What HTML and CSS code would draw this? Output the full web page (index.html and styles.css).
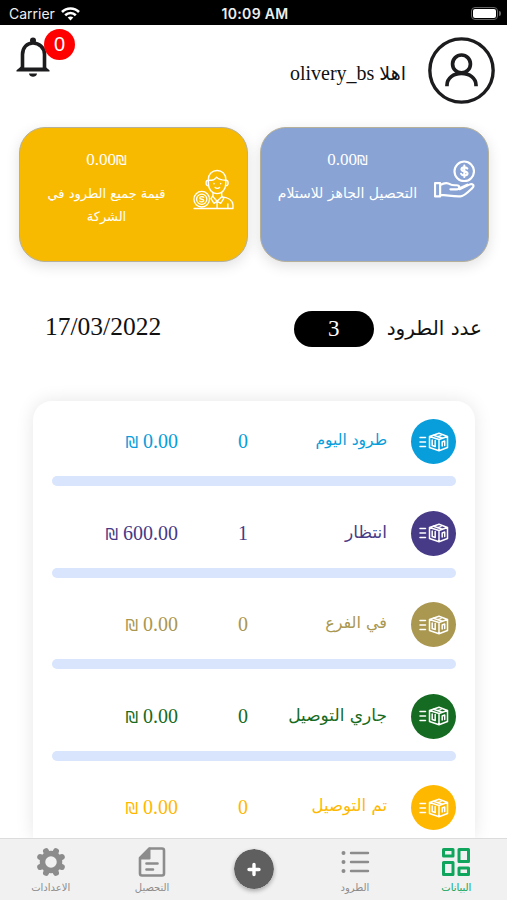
FILE: index.html
```html
<!DOCTYPE html>
<html lang="ar" dir="rtl">

<head>
    <meta charset="UTF-8">
    <meta name="viewport" content="width=device-width, initial-scale=1.0">
    <title>Olivery</title>
    <link rel="stylesheet" href="styles.css">
</head>

<body>
    <!-- shared icons -->
    <svg class="sprite" xmlns="http://www.w3.org/2000/svg">
        <symbol id="box" viewBox="0 0 30 20">
            <g fill="none" stroke="#fff" stroke-width="1.5" stroke-linejoin="round" stroke-linecap="round">
                <path d="M1 5.5h5.5M1 10h5.5M1 14.500h5.500" />
                <path d="M10.500 4.500L20 1.200l8.500 3.300v11L20 18.800l-9.500-3.300zM10.500 4.500L20 7.500l8.500-3M20 7.500v11.300" />
                <path d="M14.500 3.300l8.800 3M18.500 4.800l3.500-1.200" />
                <path d="M13.200 8v5.500l3 1V8.500M23.200 14V10l2.500-1v4.500" />
            </g>
        </symbol>
    </svg>

    <div class="status-bar" dir="ltr">
        <div class="carrier">
            <span>Carrier</span>
            <svg width="19" height="14" viewBox="0 0 19 14" fill="none" stroke="#fff" stroke-width="2.600">
                <path d="M1 5C5.600.400 13.400.400 18 5" />
                <path d="M4.200 8.200c3-2.900 7.600-2.900 10.600 0" />
                <path d="M9.500 13.500L6.700 10.600c1.600-1.400 4-1.400 5.600 0z" fill="#fff" stroke="none" />
            </svg>
        </div>
        <div class="clock">10:09 AM</div>
        <div class="battery-wrap">
            <div class="battery"></div>
            <div class="battery-tip"></div>
        </div>
    </div>

    <header class="header">
        <svg class="avatar" viewBox="0 0 66 66" fill="none" stroke="#1c1c1e">
            <circle cx="33" cy="33" r="31.200" stroke-width="3.300" />
            <circle cx="33" cy="26.500" r="8.800" stroke-width="3.600" />
            <path d="M18.700 48.500v-1c0-7 6.500-11.700 14.300-11.700s14.300 4.700 14.300 11.700v1" stroke-width="3.600" />
        </svg>
        <div class="hello"><span class="ar">اهلا</span> <bdi>olivery_bs</bdi></div>
        <div class="bell">
            <svg width="34" height="40" viewBox="0 0 34 40">
                <circle cx="17" cy="3.500" r="3" fill="#1c1c1e" />
                <path d="M6.500 32V17.500C6.500 10.500 11 6 17 6s11.500 4.500 11.500 11.500V32" fill="none" stroke="#1c1c1e" stroke-width="3.600" />
                <path d="M.500 34.500v-1.300L5 29.500v1h24v-1l4.500 3.700v1.300z" fill="#1c1c1e" />
                <path d="M13 36.500h8c-.5 4.300-7.500 4.300-8 0z" fill="#1c1c1e" />
            </svg>
            <span class="badge">0</span>
        </div>
    </header>

    <section class="cards">
        <div class="card blue">
            <svg class="card-icon" viewBox="0 0 40 40" fill="none" stroke="#fff" stroke-width="2.100" stroke-linejoin="round" stroke-linecap="round">
                <circle cx="29.500" cy="11" r="9.500" />
                <path d="M32.500 8.300c-.600-1.300-5.500-2-5.700.700 0 2.800 5.900 1.400 5.900 4.200-.1 2.700-5.300 2.300-6.200.3M29.600 5.500v11" />
                <path d="M1 22.500h5v13H1zM6 24.500c4-2.500 7-2.800 10-.700 1.500 1 3.500.800 6 .8 3.500 0 3.500 4 0 4h-6M24 28l8.500-4M25 28.500l9.500-4.500c3-1.400 5.500 1 3 3.200-3.500 3.300-7.500 7.800-11.500 8.300-8 .5-13-1.500-20-1.500" />
            </svg>
            <div class="card-text">
                <div class="card-amount"><bdi dir="ltr">0.00<span class="shekel">₪</span></bdi></div>
                <div class="card-title ar">التحصيل الجاهز للاستلام</div>
            </div>
        </div>
        <div class="card yellow">
            <svg class="card-icon" viewBox="0 0 40 40" fill="none" stroke="#fff" stroke-width="1.300" stroke-linejoin="round" stroke-linecap="round">
                <path d="M15 14V10c0-5 3.500-8.500 8.500-8.500S32 5 32 10v4c0 6-3.500 10-8.500 10S15 20 15 14z" />
                <path d="M15 11h3c2.500 0 4-1.500 5-3 2 2.500 5 3 9 3M15 11c-3 0-3 5.500 0 5.500M32 11c3 0 3 5.500 0 5.500M20.500 14v.5M27 14v.5M21.500 18c1 1.300 3.500 1.300 4.500 0" />
                <path d="M19.500 23v4l4 4.500 4.500-4.500v-4M19.500 26l-2 3 3 4.500 3-2 3.500 2 3-4.500-2-3M28 27c7 1 10.500 3 11 8v3.500H1M23.500 32v6M34 34v4" />
                <circle cx="8.500" cy="29.500" r="7.600" />
                <circle cx="8.500" cy="29.500" r="5" />
                <path d="M10.500 27.500c-1-1-4-.7-4 .8 0 1.700 4 .7 4 2.500 0 1.500-3 1.700-4 .5" />
            </svg>
            <div class="card-text">
                <div class="card-amount"><bdi dir="ltr">0.00<span class="shekel">₪</span></bdi></div>
                <div class="card-title ar">قيمة جميع الطرود في الشركة</div>
            </div>
        </div>
    </section>

    <section class="summary">
        <div class="summary-title ar">عدد الطرود</div>
        <div class="pill">3</div>
        <div class="date" dir="ltr">17/03/2022</div>
    </section>

    <main class="panel">
        <div class="row today">
            <div class="row-info">
                <div class="dot"><svg width="30" height="20"><use href="#box" /></svg></div>
                <div class="name ar">طرود اليوم</div>
                <div class="count">0</div>
                <div class="amount" dir="ltr"><span class="shekel">₪</span> 0.00</div>
            </div>
            <div class="bar"></div>
        </div>
        <div class="row waiting">
            <div class="row-info">
                <div class="dot"><svg width="30" height="20"><use href="#box" /></svg></div>
                <div class="name ar">انتظار</div>
                <div class="count">1</div>
                <div class="amount" dir="ltr"><span class="shekel">₪</span> 600.00</div>
            </div>
            <div class="bar"></div>
        </div>
        <div class="row branch">
            <div class="row-info">
                <div class="dot"><svg width="30" height="20"><use href="#box" /></svg></div>
                <div class="name ar">في الفرع</div>
                <div class="count">0</div>
                <div class="amount" dir="ltr"><span class="shekel">₪</span> 0.00</div>
            </div>
            <div class="bar"></div>
        </div>
        <div class="row delivering">
            <div class="row-info">
                <div class="dot"><svg width="30" height="20"><use href="#box" /></svg></div>
                <div class="name ar">جاري التوصيل</div>
                <div class="count">0</div>
                <div class="amount" dir="ltr"><span class="shekel">₪</span> 0.00</div>
            </div>
            <div class="bar"></div>
        </div>
        <div class="row delivered">
            <div class="row-info">
                <div class="dot"><svg width="30" height="20"><use href="#box" /></svg></div>
                <div class="name ar">تم التوصيل</div>
                <div class="count">0</div>
                <div class="amount" dir="ltr"><span class="shekel">₪</span> 0.00</div>
            </div>
        </div>
    </main>

    <nav class="tabs">
        <a class="tab active">
            <svg width="30" height="30" viewBox="0 0 30 30" fill="none" stroke="#10a55c" stroke-width="3" stroke-linejoin="round">
                <rect x="2.500" y="2.500" width="9.500" height="6.500" />
                <rect x="18" y="2.500" width="9.500" height="12" />
                <rect x="2.500" y="15.500" width="9.500" height="12" />
                <rect x="18" y="21" width="9.500" height="6.500" />
            </svg>
            <span class="ar">البيانات</span>
        </a>
        <a class="tab">
            <svg width="30" height="30" viewBox="0 0 30 30" stroke="#8c8c8c" stroke-width="2.400" stroke-linecap="round">
                <path d="M11 6h17M11 15h17M11 24h17" />
                <path d="M3.500 6h.01M3.500 15h.01M3.500 24h.01" stroke-width="4" />
            </svg>
            <span class="ar">الطرود</span>
        </a>
        <a class="tab add">
            <svg width="40" height="40" viewBox="0 0 40 40">
                <circle cx="20" cy="20" r="20" fill="#5f5f5f" />
                <path d="M20 15.500v10M15 20.500h10" stroke="#fff" stroke-width="3.400" stroke-linecap="round" />
            </svg>
        </a>
        <a class="tab">
            <svg width="30" height="30" viewBox="0 0 30 30">
                <path d="M12.500 1.500H25q2 0 2 2v23q0 2-2 2H5q-2 0-2-2V11z" fill="none" stroke="#8c8c8c" stroke-width="2.600" stroke-linejoin="round" />
                <path d="M12.500 1.500v10H3z" fill="#8c8c8c" stroke="#8c8c8c" stroke-width="2" stroke-linejoin="round" />
                <path d="M9.500 16.500h11M9.500 22.500h6.500" stroke="#8c8c8c" stroke-width="2.600" stroke-linecap="round" />
            </svg>
            <span class="ar">التحصيل</span>
        </a>
        <a class="tab">
            <svg width="30" height="30" viewBox="0 0 30 30">
                <circle cx="15" cy="15" r="8.500" fill="none" stroke="#8c8c8c" stroke-width="5.500" />
                <g stroke="#8c8c8c" stroke-width="6" stroke-linecap="round">
                    <path d="M20 4.200l-.7 1.700M10 4.200l.7 1.700M20 25.800l-.7-1.700M10 25.800l.7-1.700M4.200 10l1.700.7M4.200 20l1.700-.7M25.800 10l-1.700.7M25.800 20l-1.700-.7" />
                </g>
            </svg>
            <span class="ar">الاعدادات</span>
        </a>
    </nav>
</body>

</html>
```

FILE: styles.css
```css
* {
    box-sizing: border-box;
}

body {
    margin: 0;
    height: 900px;
    display: flex;
    flex-direction: column;
    overflow: hidden;
    background-color: #fff;
    color: #111;
    font-family: "Liberation Serif", "DejaVu Sans", serif;
}

.ar {
    font-family: "DejaVu Sans", sans-serif;
}

.shekel {
    font-family: "DejaVu Sans", sans-serif;
    font-size: 0.8em;
}

.sprite {
    position: absolute;
    width: 0;
    height: 0;
}

svg {
    display: block;
    flex: none;
}

/* Status bar */
.status-bar {
    height: 25px;
    flex: none;
    display: grid;
    grid-template-columns: 1fr auto 1fr;
    align-items: center;
    padding: 2px 6px 0 9px;
    background-color: #000;
    color: #eee;
    font-family: Inter, sans-serif;
    font-size: 14px;
}

.carrier {
    display: flex;
    align-items: center;
    gap: 6px;
}

.clock {
    font-weight: 600;
    font-size: 14px;
    letter-spacing: 0.3px;
}

.battery-wrap {
    display: flex;
    justify-content: flex-end;
    align-items: center;
    gap: 1px;
}

.battery {
    width: 27px;
    height: 13px;
    border: 1px solid #666;
    border-radius: 4px;
    background: #fff content-box;
    padding: 1px;
}

.battery-tip {
    width: 2px;
    height: 5px;
    border-radius: 0 2px 2px 0;
    background-color: #666;
}

/* Header */
.header {
    height: 102px;
    flex: none;
    display: flex;
    align-items: flex-start;
    padding: 12px 12px 0 16px;
}

.avatar {
    width: 67px;
    height: 67px;
}

.hello {
    margin: 23px 22px 0 auto;
    font-size: 20px;
    line-height: 26px;
}

.hello .ar {
    font-size: 19px;
}

.bell {
    position: relative;
    width: 34px;
}

.badge {
    position: absolute;
    left: 28px;
    top: -8px;
    width: 31px;
    height: 31px;
    border-radius: 50%;
    background-color: #ff0000;
    color: #fff;
    font: 20px/31px "Liberation Sans", sans-serif;
    text-align: center;
}

/* Cards */
.cards {
    flex: none;
    display: flex;
    gap: 12px;
    padding: 0 18px 0 19px;
}

.card {
    flex: 1;
    height: 135px;
    display: flex;
    border: 1px solid #b5b09a;
    border-radius: 26px;
    color: #fff;
    box-shadow: 0 4px 14px rgba(0, 0, 0, 0.12);
}

.blue {
    background-color: #88a3d4;
}

.yellow {
    background-color: #f8ba00;
}

.card-icon {
    width: 41px;
    height: 41px;
    margin: 32px 13px 0 0;
}

.yellow .card-icon {
    margin-top: 41px;
}

.card-text {
    flex: 1;
    padding: 22px 13px 0 13px;
    text-align: center;
}

.card-amount {
    font-size: 17px;
    line-height: 20px;
}

.card-title {
    margin-top: 12px;
    font-size: 14px;
    line-height: 23px;
}

.yellow .card-title {
    padding: 0 10px;
    font-size: 13px;
}

/* Summary */
.summary {
    flex: none;
    display: flex;
    align-items: center;
    height: 36px;
    margin: 49px 25px 54px 45px;
}

.summary-title {
    font-size: 20px;
    padding-bottom: 2px;
}

.pill {
    width: 80px;
    height: 36px;
    margin-right: 13px;
    border-radius: 18px;
    background-color: #000;
    color: #fff;
    font-size: 23px;
    line-height: 35px;
    text-align: center;
}

.date {
    margin-right: auto;
    font-size: 25.500px;
    line-height: 30px;
    padding-bottom: 5px;
}

/* Orders panel */
.panel {
    flex: 1;
    min-height: 0;
    overflow: hidden;
    margin: 0 32px 0 33px;
    padding: 18px 19px 0;
    border-radius: 19px 19px 0 0;
    box-shadow: 0 0 18px rgba(0, 0, 0, 0.1);
}

.row {
    height: 91.500px;
}

.row-info {
    display: grid;
    grid-template-columns: 45px 125px 72px auto;
    align-items: center;
    height: 45px;
    font-size: 20px;
}

.dot {
    width: 45px;
    height: 45px;
    display: flex;
    align-items: center;
    justify-content: center;
    border-radius: 50%;
    background-color: currentColor;
}

.name {
    padding: 0 24px 3px 0;
    font-size: 17px;
    line-height: 26px;
    white-space: nowrap;
}

.today .name {
    font-size: 15.500px;
}

.branch .name {
    font-size: 16px;
}

.delivered .name {
    font-size: 16.500px;
}

.count {
    text-align: left;
    padding-left: 24px;
}

.amount {
    text-align: right;
    padding-right: 0;
    margin-right: 36px;
    justify-self: start;
}

.bar {
    height: 10px;
    margin-top: 12px;
    border-radius: 5px;
    background-color: #d8e5fd;
}

.today {
    color: #079edb;
}

.waiting {
    color: #473a87;
}

.branch {
    color: #aa9750;
}

.delivering {
    color: #166b22;
}

.delivered {
    color: #ffb800;
}

/* Bottom tabs */
.tabs {
    height: 62px;
    flex: none;
    position: relative;
    display: grid;
    grid-template-columns: repeat(5, 1fr);
    border-top: 1px solid #dcdcdc;
    background-color: #f2f1f2;
    color: #8c8c8c;
}

.tab {
    display: flex;
    flex-direction: column;
    align-items: center;
    padding-top: 8px;
    font-size: 10px;
    line-height: 22px;
}

.active {
    color: #10a55c;
}

.add {
    padding-top: 10px;
}

.add svg {
    border-radius: 50%;
    box-shadow: 0 2px 4px rgba(0, 0, 0, 0.3);
}
```
